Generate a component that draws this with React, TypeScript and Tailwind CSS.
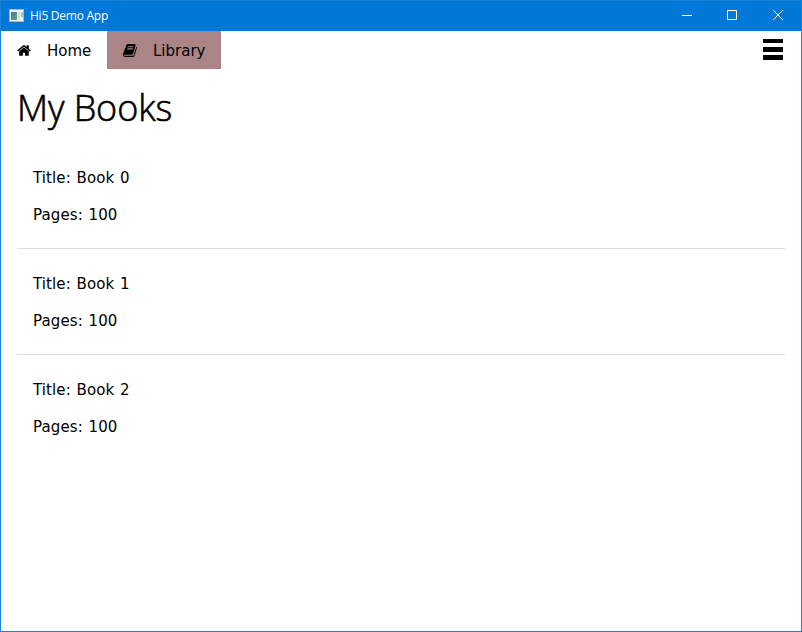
import React from "react";

const books = [0, 1, 2].map((n) => ({ title: `Book ${n}`, pages: 100 }));

function HomeIcon() {
  return (
    <svg className="h-[15px] w-[15px]" viewBox="64 0 1792 1792" fill="currentColor">
      <path d="M1472 992v480q0 26-19 45t-45 19h-384v-384h-256v384h-384q-26 0-45-19t-19-45v-480q0-1 .5-3t.5-3l575-474 575 474q1 2 1 6zm223-69l-62 74q-8 9-21 11h-3q-13 0-21-7l-692-577-692 577q-12 8-24 7-13-2-21-11l-62-74q-8-10-7-23.5t11-21.5l719-599q32-26 76-26t76 26l244 204v-195q0-14 9-23t23-9h192q14 0 23 9t9 23v408l219 182q10 8 11 21.5t-7 23.5z" />
    </svg>
  );
}

function BookIcon() {
  return (
    <svg className="h-[15px] w-[15px]" viewBox="64 0 1792 1792" fill="currentColor">
      <path d="M1703 478q40 57 18 129l-275 906q-19 64-76.5 107.5t-122.5 43.5h-923q-77 0-148.5-53.5t-99.5-131.5q-24-67-2-127 0-4 3-27t4-37q1-8-3-21.5t-3-19.5q2-11 8-21t16.5-23.5 16.5-23.5q23-38 45-91.5t30-91.5q3-10 .5-30t-.5-28q3-11 17-28t17-23q21-36 42-92t25-90q1-9-2.5-32t.5-28q4-13 22-30.5t22-22.5q19-26 42.5-84.5t27.5-96.5q1-8-3-25.5t-2-26.5q2-8 9-18t18-23 17-21q8-12 16.5-30.5t15-35 16-36 19.5-32 26.5-23.5 36-11.5 47.5 5.5l-1 3q38-9 51-9h761q74 0 114 56t18 130l-274 906q-36 119-71.5 153.5t-128.5 34.5h-869q-27 0-38 15-11 16-1 43 24 70 144 70h923q29 0 56-15.5t35-41.5l300-987q7-22 5-57 38 15 59 43zm-1064 2q-4 13 2 22.5t20 9.5h608q13 0 25.5-9.5t16.5-22.5l21-64q4-13-2-22.5t-20-9.5h-608q-13 0-25.5 9.5t-16.5 22.5zm-83 256q-4 13 2 22.5t20 9.5h608q13 0 25.5-9.5t16.5-22.5l21-64q4-13-2-22.5t-20-9.5h-608q-13 0-25.5 9.5t-16.5 22.5z" />
    </svg>
  );
}

function TitleBar() {
  return (
    <header className="flex h-[30px] shrink-0 items-center bg-[#0078d7] text-white">
      <svg className="mb-[2px] ml-[8px] h-[13px] w-[15px]" viewBox="0 0 15 13">
        <defs>
          <linearGradient id="pane" x1="0" y1="0" x2="1" y2="1">
            <stop offset="0" stopColor="#4a78a0" />
            <stop offset="1" stopColor="#5fa878" />
          </linearGradient>
        </defs>
        <rect width="15" height="13" fill="#b9b5b0" />
        <rect x="1" y="1" width="13" height="11" fill="#f3f3f3" />
        <rect x="2" y="3" width="6" height="8" fill="url(#pane)" />
        <rect x="9" y="3" width="2" height="8" fill="#d5dcdc" />
        <rect x="12" y="3" width="2" height="5" fill="#9fc3b4" />
      </svg>
      <span className="ml-[6px] font-['Open_Sans',sans-serif] text-[12px] leading-[30px] tracking-[-0.25px]">Hi5 Demo App</span>
      <svg className="ml-auto h-[30px] w-[137px]" viewBox="664 1 137 30" fill="none" stroke="white">
        <path d="M682 15.5h10" />
        <path d="M727.5 10.5h9v9h-9z" />
        <path d="M773 10l10 10M783 10l-10 10" />
      </svg>
    </header>
  );
}

export default function App() {
  return (
    <div className="flex h-[632px] w-[802px] flex-col border border-[#1883d7] bg-white font-['DejaVu_Sans','Verdana',sans-serif] text-[15px] text-black">
      <TitleBar />
      <main className="flex-1">
        <nav className="flex h-[38px]">
          <div className="flex w-[106px] items-center pl-4"><HomeIcon /><span className="mt-[2px] ml-[15px]">Home</span></div>
          <div className="flex w-[114px] items-center bg-[#ab8585] pl-4"><BookIcon /><span className="mt-[2px] ml-[15px]">Library</span></div>
          <div className="mt-2 mr-[18px] ml-auto flex w-5 flex-col">
            <i className="h-1 bg-black" /><i className="mt-1 h-[5px] bg-black" /><i className="mt-[3px] h-[5px] bg-black" />
          </div>
        </nav>
        <h1 className="ml-4 h-[74px] pt-[12px] font-['Open_Sans',sans-serif] text-[36px] leading-[54px] font-light tracking-[-0.1px] [-webkit-text-stroke:0.6px_black]">My Books</h1>
        <ul className="mx-4">
          {books.map((b) => (
            <li key={b.title} className="h-[106px] border-b border-[#ddd] px-4 pt-[24px] leading-[22px] tracking-[0.1px] [word-spacing:0.9px] last:border-0">
              <p>Title: {b.title}</p>
              <p className="mt-[15px]">Pages: {b.pages}</p>
            </li>
          ))}
        </ul>
      </main>
    </div>
  );
}
